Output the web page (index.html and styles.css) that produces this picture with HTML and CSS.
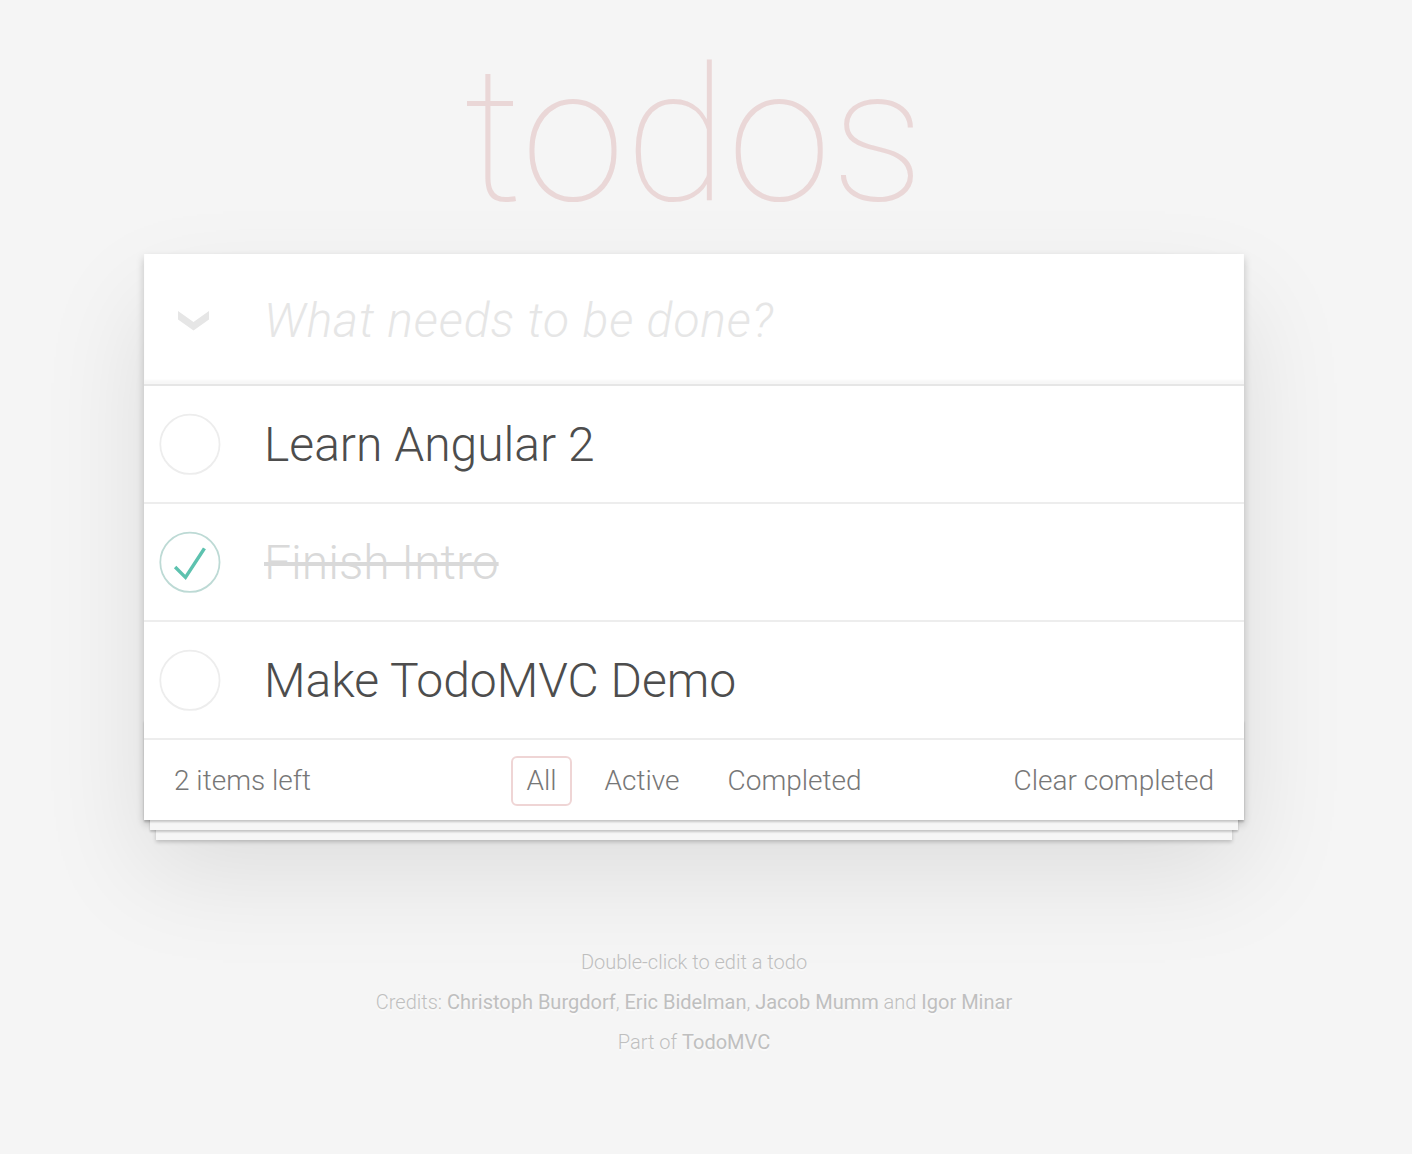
FILE: index.html
```html
<!DOCTYPE html>
<html lang="en">
<head>
<meta charset="utf-8">
<title>Angular2 • TodoMVC</title>
<link rel="stylesheet" href="styles.css">
</head>
<body>
<div class="page">
  <h1 class="title">todos</h1>
  <section class="todoapp">
    <header class="header">
      <div class="toggle-all">
        <svg width="31" height="20" viewBox="0 0 31 20"><polygon points="0,0 15.5,11 31,0 31,8.5 15.5,19.5 0,8.5" fill="#e6e6e6"/></svg>
      </div>
      <input class="new-todo" placeholder="What needs to be done?" autofocus>
    </header>
    <section class="main">
      <ul class="todo-list">
        <li class="todo">
          <span class="toggle">
            <svg width="80" height="80" viewBox="-10 -18 100 135"><circle cx="50" cy="50" r="50" fill="none" stroke="#ededed" stroke-width="3"/></svg>
          </span>
          <label class="todo-label">Learn Angular 2</label>
        </li>
        <li class="todo completed">
          <span class="toggle">
            <svg width="80" height="80" viewBox="-10 -18 100 135"><circle cx="50" cy="50" r="50" fill="none" stroke="#bddad5" stroke-width="3"/><path fill="#5dc2af" d="M72 25L42 71 27 56l-4 4 20 20 34-52z"/></svg>
          </span>
          <label class="todo-label">Finish Intro</label>
        </li>
        <li class="todo">
          <span class="toggle">
            <svg width="80" height="80" viewBox="-10 -18 100 135"><circle cx="50" cy="50" r="50" fill="none" stroke="#ededed" stroke-width="3"/></svg>
          </span>
          <label class="todo-label">Make TodoMVC Demo</label>
        </li>
      </ul>
    </section>
    <footer class="footer">
      <span class="todo-count"><strong class="count">2</strong> items left</span>
      <ul class="filters">
        <li><a class="filter selected" href="#/">All</a></li>
        <li><a class="filter" href="#/active">Active</a></li>
        <li><a class="filter" href="#/completed">Completed</a></li>
      </ul>
      <button class="clear-completed">Clear completed</button>
    </footer>
  </section>
  <footer class="info">
    <p>Double-click to edit a todo</p>
    <p>Credits: <a href="#">Christoph Burgdorf</a>, <a href="#">Eric Bidelman</a>, <a href="#">Jacob Mumm</a> and <a href="#">Igor Minar</a></p>
    <p>Part of <a href="#">TodoMVC</a></p>
  </footer>
</div>
</body>
</html>
```

FILE: styles.css
```css
html, body {
  margin: 0;
  padding: 0;
}

body {
  background: #f5f5f5;
  color: #4d4d4d;
  font-family: Roboto, "Liberation Sans", Arial, sans-serif;
  font-size: 28px;
  line-height: 1.4em;
  font-weight: 300;
  padding-right: 24px;
}

.page {
  width: 1100px;
  margin: 0 auto;
}

.title {
  margin: 0;
  padding-top: 36px;
  height: 200px;
  font-size: 188px;
  line-height: 200px;
  font-weight: 100;
  text-align: center;
  color: rgba(175, 47, 47, 0.15);
}

.todoapp {
  background: #fff;
  margin: 18px 0 0 0;
  position: relative;
  box-shadow: 0 4px 8px 0 rgba(0, 0, 0, 0.2), 0 50px 100px 0 rgba(0, 0, 0, 0.1);
}

.header {
  display: flex;
  align-items: center;
  height: 130px;
  box-shadow: inset 0 -4px 2px rgba(0, 0, 0, 0.03);
}

.toggle-all {
  width: 120px;
  flex: none;
  display: flex;
  padding-left: 34px;
  box-sizing: border-box;
  padding-top: 4px;
}

.toggle-all svg { display: block; }

.new-todo {
  flex: 1;
  min-width: 0;
  border: none;
  outline: none;
  background: transparent;
  padding: 3px 32px 0 0;
  margin: 0;
  font-family: inherit;
  font-size: 48px;
  font-weight: 300;
  line-height: 1.4;
  color: inherit;
}

.new-todo::placeholder {
  font-style: italic;
  font-weight: 300;
  color: #e6e6e6;
  letter-spacing: 0.9px;
}

.main {
  border-top: 2px solid #e6e6e6;
}

.todo-list {
  margin: 0;
  padding: 0;
  list-style: none;
}

.todo {
  display: flex;
  align-items: center;
  font-size: 48px;
  border-bottom: 2px solid #ededed;
}

.toggle {
  width: 120px;
  flex: none;
  display: flex;
  align-items: center;
}

.toggle svg { display: block; }

.todo-label {
  flex: 1;
  display: block;
  padding: 29.5px 30px 29px 0;
  line-height: 1.2;
  word-break: break-all;
}

.completed .todo-label {
  color: #d9d9d9;
  text-decoration: line-through;
}

.footer {
  position: relative;
  display: grid;
  grid-template-columns: 1fr auto 1fr;
  align-items: center;
  height: 80px;
  padding: 2px 30px 0;
  color: #777;
  box-sizing: border-box;
}

.footer::before {
  content: '';
  position: absolute;
  right: 0;
  bottom: 0;
  left: 0;
  height: 100px;
  overflow: hidden;
  pointer-events: none;
  box-shadow: 0 2px 2px rgba(0, 0, 0, 0.2),
              0 16px 0 -6px #f6f6f6,
              0 18px 2px -6px rgba(0, 0, 0, 0.2),
              0 32px 0 -12px #f6f6f6,
              0 34px 4px -12px rgba(0, 0, 0, 0.2);
}

.todo-count {
  text-align: left;
  line-height: 40px;
}

.count { font-weight: 300; }

.filters {
  margin: 0;
  padding: 0;
  list-style: none;
  display: flex;
  gap: 6px;
}

.filter {
  display: block;
  color: inherit;
  margin: 6px;
  padding: 3px 13px;
  line-height: 40px;
  text-decoration: none;
  border: 2px solid transparent;
  border-radius: 6px;
}

.filter.selected {
  border-color: rgba(175, 47, 47, 0.2);
}

.clear-completed {
  justify-self: end;
  margin: 0;
  padding: 0;
  border: 0;
  background: none;
  font-family: inherit;
  font-size: 28px;
  font-weight: 300;
  line-height: 40px;
  color: inherit;
  cursor: pointer;
}

.info {
  margin: 132px auto 0;
  color: #bfbfbf;
  font-size: 20px;
  text-shadow: 0 2px 0 rgba(255, 255, 255, 0.5);
  text-align: center;
}

.info p {
  margin: 20px 0;
  line-height: 1;
}

.info a {
  color: inherit;
  text-decoration: none;
  font-weight: 400;
}
```
